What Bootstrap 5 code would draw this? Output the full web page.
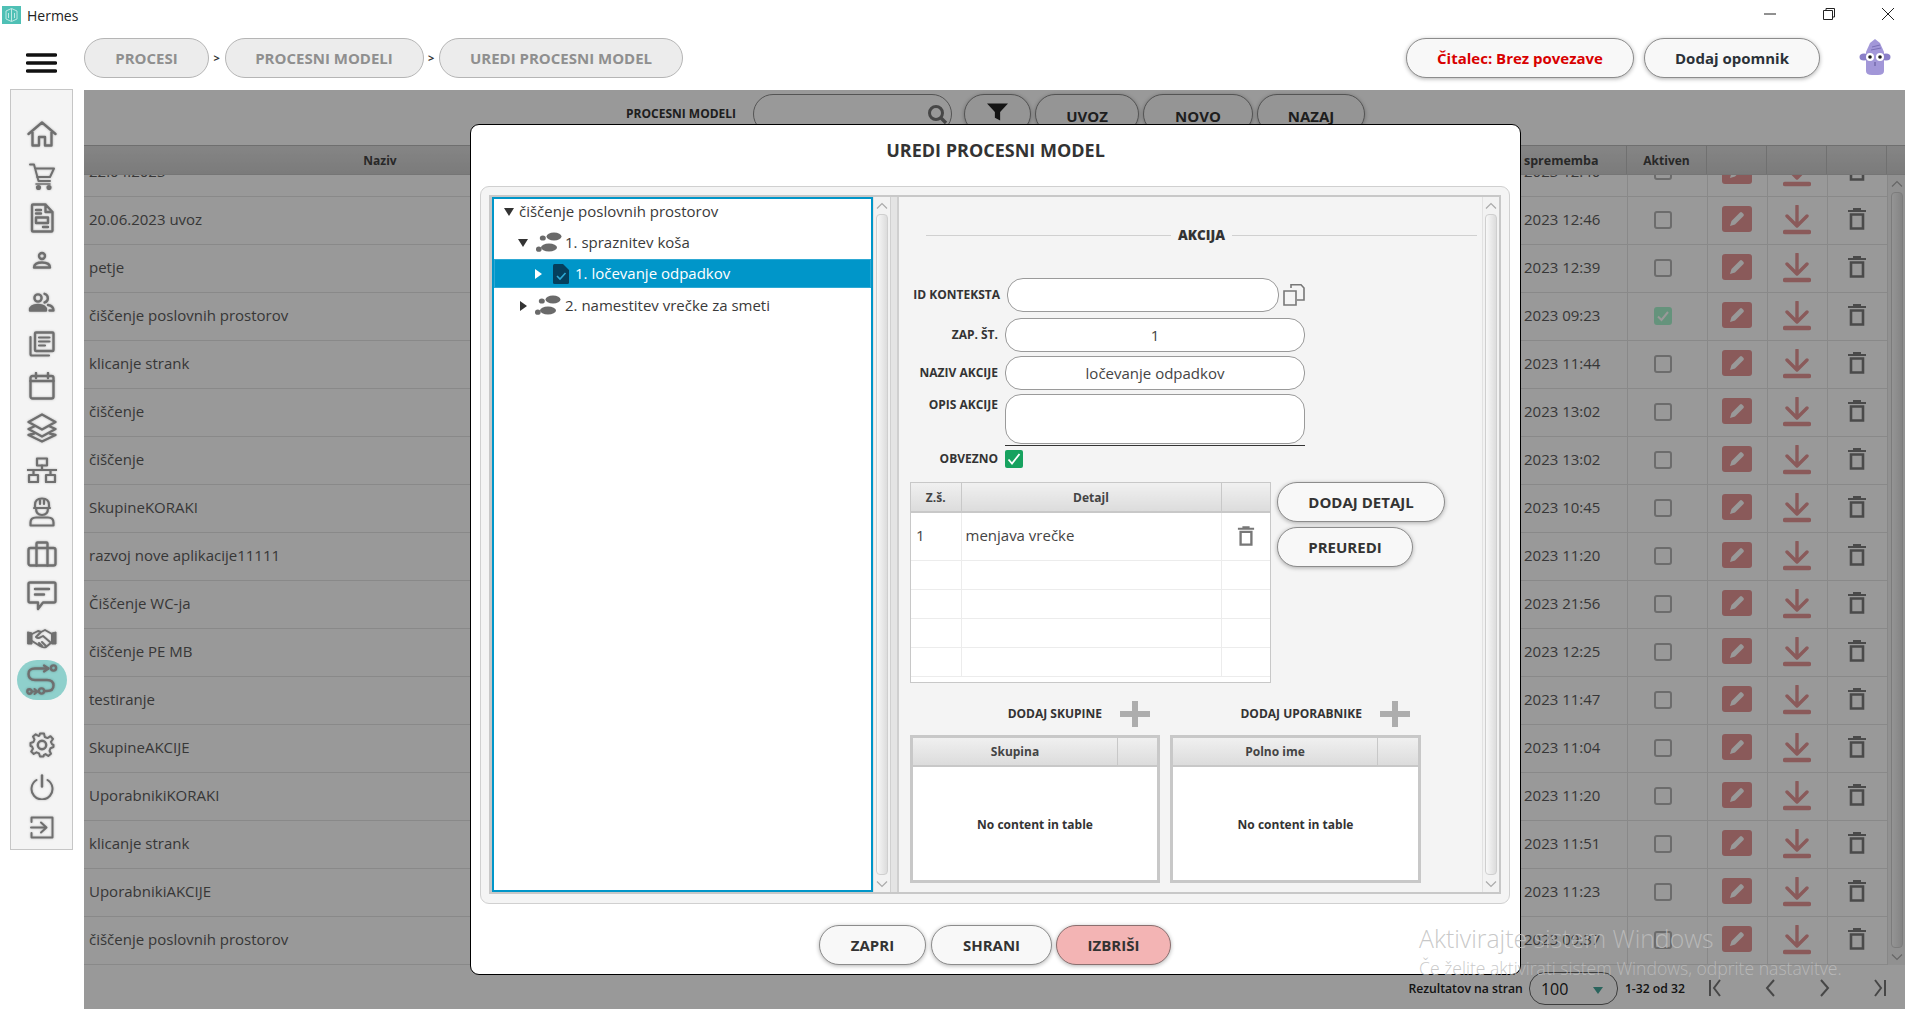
<!DOCTYPE html>
<html lang="sl">
<head>
<meta charset="utf-8">
<title>Hermes</title>
<link href="https://cdn.jsdelivr.net/npm/bootstrap@5.3.0/dist/css/bootstrap.min.css" rel="stylesheet">
<style>
html,body{margin:0;height:1029px;width:1920px;overflow:hidden;background:#fff;}
body{font-family:"Open Sans","Liberation Sans",sans-serif;font-size:15px;color:#333;}
.app-shell{position:relative;width:1920px;height:1029px;overflow:hidden;}
.title-bar{height:30px;padding-left:2px;}
.title-bar .app-name{font-size:14px;margin-left:6px;color:#222;}
.win-ctrls{margin-left:auto;margin-top:-2px;}
.win-ctrls svg{display:block;}
.top-bar{height:60px;padding-top:8px;}
.burger{width:84px;padding-left:26px;}
.pill-btn{height:40px;border-radius:20px;border:1px solid #8c8c8c;background:#f8f8f8;font-weight:700;font-size:15px;color:#333;box-shadow:0 1px 4px rgba(0,0,0,.3);display:flex;align-items:center;justify-content:center;padding:1px 0 0;white-space:nowrap;}
.crumb{background:#ececec;color:#8f8f8f;border-color:#b5b5b5;box-shadow:none;}
.crumb-1{width:125px}.crumb-2{width:199px}.crumb-3{width:244px}
.crumb-sep{width:15.5px;text-align:center;font-size:11px;line-height:40px;height:40px;font-weight:700;color:#333;}
.btn-reader{width:228px;color:#d80000;margin-left:723px;}
.btn-remind{width:176px;margin-left:10px;color:#2b3138;}
.mascot{margin-left:39px;}
.body-row{height:939px;}
.side-rail{margin-left:10px;width:63px;height:761px;margin-top:-1px;background:#f4f4f4;border:1px solid #c6c6c6;padding-top:23px;margin-right:11px;flex:none;}
.rail-slot{height:42px;display:flex;align-items:center;justify-content:center;position:relative;}
.rail-slot svg{fill:none;stroke:#6f6f6f;stroke-width:2.4;stroke-linecap:round;stroke-linejoin:round;filter:drop-shadow(0 0 1px rgba(0,0,0,.25));}
.rail-active{background:#8fd0cc;width:50px;height:40px;border-radius:20px;margin:1px auto 1px;}
.rail-gear{margin-top:23px;}
.rail-exit{margin-top:-2px;}
.work-area{position:relative;width:1821px;height:919px;overflow:hidden;background:#fff;flex:none;}
.tool-row{height:55px;padding-top:4px;}
.tool-label{margin-left:542px;width:127px;font-size:12px;font-weight:700;color:#333;padding-top:11px;}
.search-pill{width:199px;height:40px;border:1px solid #8c8c8c;border-radius:20px;background:#fff;position:relative;}
.search-pill svg{position:absolute;right:3px;top:8px;}
.tool-row .pill-btn{width:104px;margin-left:4px;align-items:flex-start;padding-top:10px;}
.tool-row .pill-filter{width:67px;margin-left:12px;padding-top:8px;}
.tool-row .pill-new{width:110px;}
.tool-row .pill-back{width:108px;}
.grid-wrap{height:820px;}
.grid-head{height:30px;border-top:1px solid #b9b9b9;border-bottom:1px solid #c3c3c3;background:linear-gradient(#dedede,#cdcdcd);font-size:12px;font-weight:700;color:#444;display:flex;}
.grid-head>div{display:flex;align-items:center;justify-content:center;border-right:1px solid #bbb;padding-top:2px;}
.grid-head>div.c-date{justify-content:flex-start;padding-left:8px;font-size:12.5px;}
.c-name{width:592px;flex:none}.c-fill{width:840px;flex:none}.c-date{width:111px;flex:none}.c-act{width:80px;flex:none}.c-ico{width:60px;flex:none}.c-sb{width:18px;flex:none}
.grid-body{height:790px;overflow:hidden;}
.grid-scroll{width:1803px;margin-top:-27px;}
.main-table{table-layout:fixed;width:1803px;margin:0;}
.main-table.table>tbody>tr>td{height:48px;padding:0;vertical-align:middle;border-bottom:1px solid #e4e4e4;border-top:0;border-left:0;border-right:1px solid #e4e4e4;color:#5c5c5c;font-size:15px;background:#fff;box-shadow:none;}
.main-table.table>tbody>tr>td.nm{padding:0 0 2px 5px;border-right:0;}
.main-table.table>tbody>tr>td.fl{border-right:0;}
.main-table.table>tbody>tr>td.dt{padding:0 0 2px 8px;white-space:nowrap;}
.main-table.table>tbody>tr>td.ct{text-align:center;}
.main-table svg{display:inline-block;vertical-align:middle;}
.chk-box{display:inline-block;width:18px;height:18px;border:2px solid #b4b4b4;border-radius:3px;vertical-align:middle;margin:0 8px 3px 0;}
.chk-on{background:#a9f5cf;border-color:#a9f5cf;position:relative;}
.chk-on svg{position:absolute;left:0;top:0;}
.ed-btn{display:inline-flex;width:30px;height:26px;background:#e69797;border-radius:3px;align-items:center;justify-content:center;margin-top:1px;}
.trash-cell svg{margin-bottom:3px;}
.grid-sb{background:#ececec;border-left:1px solid #ddd;height:790px;}
.pager-row{height:44px;font-size:12.2px;font-weight:600;color:#222;padding-right:19px;}
.page-select{width:89px;height:33px;border:1px solid #666;border-radius:16px;margin:7px 7px 0 6px;padding-left:11px;font-size:16px;font-weight:400;position:relative;display:flex;align-items:center;background:#fff;}
.page-select i{position:absolute;right:14px;top:14px;width:0;height:0;border:5px solid transparent;border-top:7px solid #46a79b;border-bottom:0;}
.pager-nav{margin-left:24px;width:177px;padding-top:14px;}
.pager-nav svg{fill:none;stroke:#777;stroke-width:2;}
.pager-txt{padding-top:15px;}
.scrim{position:absolute;inset:0;background:rgba(0,0,0,.4);}
.dlg{position:absolute;left:386px;top:34px;width:1051px;height:851px;background:#fff;border:1px solid #000;border-radius:9px;}
.dlg-title{height:61px;display:flex;align-items:center;justify-content:center;font-size:18px;font-weight:700;color:#333;padding-bottom:10px;}
.dlg-panel{margin:0 10px 0 9px;height:718px;background:#f4f4f4;border:1px solid #d0d0d0;border-radius:9px;padding:8px;}
.split{height:699px;border:2px solid #c8c8c8;border-left-width:3px;}
.tree-box{width:381px;flex:none;background:#fff;border:2px solid #0096c9;position:relative;overflow:hidden;}
.tree-line{height:31px;display:flex;align-items:center;font-size:15px;color:#3a3a3a;position:relative;white-space:nowrap;}
.tree-line:first-child{margin-top:-3px;}
.tree-line.sel{background:#0096c9;color:#fff;height:29px;border:1px solid #2ea9d4;margin:1px 0 2px;}
.tw{width:0;height:0;flex:none;}
.tw-d{border-left:5px solid transparent;border-right:5px solid transparent;border-top:8px solid #333;}
.tw-r{border-top:5px solid transparent;border-bottom:5px solid transparent;border-left:7px solid #333;}
.tw-w{border-left-color:#fff;}
.vbar{width:17px;flex:none;background:#f2f2f2;border-left:1px solid #e2e2e2;display:flex;flex-direction:column;align-items:center;position:relative;}
.vbar .arrow{height:17px;display:flex;align-items:center;justify-content:center;flex:none;}
.vbar .thumb{flex:1;width:12px;border:1px solid #cfcfcf;border-radius:4px;background:linear-gradient(90deg,#f8f8f8,#dcdcdc);}
.divider{width:9px;flex:none;background:#e4e4e4;border-left:1px solid #d0d0d0;border-right:2px solid #cfcfcf;}
.form-pane{flex:1;background:#f4f4f4;padding-left:11px;min-width:0;}
.sect-head{height:20px;margin-top:28px;margin-left:16px;margin-right:5px;display:flex;align-items:center;font-size:13.5px;font-weight:700;color:#333;}
.sect-head span{flex:1;height:1px;background:#d0d0d0;}
.sect-head b{margin:0 7px;}
.fld-row{display:flex;align-items:center;}
.fld-lab{font-size:12px;font-weight:700;color:#333;text-align:right;white-space:nowrap;}
.inp{height:34px;background:#fff;border:1px solid #9a9a9a;border-radius:16px;font-size:15px;color:#444;display:flex;align-items:center;justify-content:center;padding:0;}
.inp-long{width:300px;margin-left:7px;}
.l88{width:88px;}
.notes{height:50px;align-items:flex-start;}
.notes-wrap{margin-left:7px;border-bottom:1px solid #333;padding-bottom:1px;}
.notes-wrap .inp{height:50px;width:300px;}
.green-chk{width:18px;height:18px;background:#17a25f;border-radius:2px;margin-left:7px;display:flex;align-items:center;justify-content:center;}
.detail-tbl{width:361px;height:201px;border:1px solid #c8c8c8;overflow:hidden;background:#fff;}
.detail-tbl .table{table-layout:fixed;width:359px;margin:0;}
.detail-tbl .table>thead>tr>th{height:29px;padding:2px 0 0;background:linear-gradient(#f0f0f0,#dcdcdc);font-size:12px;font-weight:700;text-align:center;color:#444;border:0;border-right:1px solid #c8c8c8;border-bottom:2px solid #c8c8c8;vertical-align:middle;box-shadow:none;}
.detail-tbl .table>tbody>tr>td{height:29px;padding:0;background:#fff;border:0;border-right:1px solid #ececec;border-bottom:1px solid #ececec;font-size:15px;color:#444;vertical-align:middle;box-shadow:none;}
.detail-tbl .table>tbody>tr.first>td{height:48px;padding-bottom:2px;}
.add-half{width:249px;display:flex;align-items:center;justify-content:flex-end;font-size:12px;font-weight:700;color:#333;}
.plus-ico{margin-left:18px;}
.mini-tbl{width:249px;height:148px;border:3px solid #c8c8c8;background:#fff;display:flex;flex-direction:column;}
.mini-head{height:29px;flex:none;display:flex;background:linear-gradient(#f0f0f0,#dcdcdc);border-bottom:2px solid #c8c8c8;font-size:12px;font-weight:700;color:#444;}
.mini-head div:first-child{width:205px;display:flex;align-items:center;justify-content:center;border-right:1px solid #c8c8c8;}
.mini-empty{flex:1;display:flex;align-items:center;justify-content:center;font-size:12px;font-weight:700;color:#333;padding-top:2px;}
.dlg-foot{padding-top:21px;padding-right:1px;}
.f-zapri{width:107px}.f-shrani{width:121px;margin-left:5px}.f-izbrisi{width:115px;margin-left:4px;background:#f3b4b4!important;border-color:#8b6f6f!important}
.wm{position:absolute;left:1419px;top:922px;color:rgba(190,190,190,.85);font-weight:300;pointer-events:none;white-space:nowrap;}
.wm-1{font-size:24.8px;line-height:33px;}
.wm-2{font-size:17.6px;line-height:24px;margin-top:1px;}
.act-wide{width:168px;}
.act-narrow{width:136px;margin-top:5px;}
</style>
</head>
<body>
<svg width="0" height="0" style="position:absolute">
<defs>
<symbol id="i-pen" viewBox="0 0 20 20"><path d="M3 17 L4.5 12 L13 3.5 Q14 2.7 15 3.5 L16.5 5 Q17.3 6 16.5 7 L8 15.5 Z" fill="#fff"/></symbol>
<symbol id="i-dl" viewBox="0 0 28 30"><path d="M14 1 V20 M4 11 L14 21 L24 11" fill="none" stroke="#e69797" stroke-width="3.4" stroke-linecap="round" stroke-linejoin="round"/><path d="M2 27 H26" stroke="#e69797" stroke-width="4.4" stroke-linecap="round"/></symbol>
<symbol id="i-tr" viewBox="0 0 20 22"><path d="M1 3 H19 M6 1.2 H14" stroke="currentColor" stroke-width="2.2"/><path d="M4 6.5 H16 V20.5 H4 Z" fill="none" stroke="currentColor" stroke-width="2.6"/></symbol>
<symbol id="i-ft" viewBox="0 0 26 21"><g fill="#6a6a6a"><ellipse cx="18" cy="4.5" rx="7.5" ry="4"/><ellipse cx="6.8" cy="6" rx="3" ry="2.6"/><ellipse cx="13" cy="15.5" rx="8" ry="4"/><ellipse cx="2.8" cy="17.2" rx="2.8" ry="2.6"/></g></symbol>
<symbol id="i-up" viewBox="0 0 12 8"><path d="M1 6.5 L6 1.5 L11 6.5" fill="none" stroke="#aaa" stroke-width="1.2"/></symbol>
<symbol id="i-down" viewBox="0 0 12 8"><path d="M1 1.5 L6 6.5 L11 1.5" fill="none" stroke="#aaa" stroke-width="1.2"/></symbol>
<symbol id="i-plus" viewBox="0 0 30 26"><path d="M12 0 H18 V10 H30 V16 H18 V26 H12 V16 H0 V10 H12 Z" fill="#adadad"/></symbol>
</defs>
</svg>
<div class="app-shell">
  <div class="title-bar d-flex align-items-center">
    <svg width="19" height="18" viewBox="0 0 19 18"><rect width="19" height="18" fill="#4fc0b5"/><path d="M4 5 L9.5 2.5 L15 5 V13 L9.5 15.5 L4 13 Z M9.5 2.5 V15.5 M6.5 7 V12 M12.5 7 V12" fill="none" stroke="#bfe9e4" stroke-width="1"/></svg>
    <span class="app-name">Hermes</span>
    <div class="win-ctrls d-flex align-items-center">
      <svg width="14" height="14" viewBox="0 0 14 14" style="margin-right:45px"><path d="M1 7 H13" stroke="#222" stroke-width="1"/></svg>
      <svg width="14" height="14" viewBox="0 0 14 14" style="margin-right:45px"><path d="M1.5 3.5 H10.5 V12.5 H1.5 Z M4 3.5 V1.5 H12.5 V10 H10.5" fill="none" stroke="#222" stroke-width="1"/></svg>
      <svg width="14" height="14" viewBox="0 0 14 14" style="margin-right:25px"><path d="M1 1 L13 13 M13 1 L1 13" stroke="#222" stroke-width="1"/></svg>
    </div>
  </div>
  <div class="top-bar d-flex align-items-start">
    <div class="burger"><svg width="31" height="20" viewBox="0 0 31 20" style="margin-top:15px;display:block"><path d="M1.5 2 H29.5 M1.5 10 H29.5 M1.5 18 H29.5" stroke="#111" stroke-width="3.4" stroke-linecap="round"/></svg></div>
    <button class="pill-btn crumb crumb-1" type="button">PROCESI</button>
    <span class="crumb-sep">&gt;</span>
    <button class="pill-btn crumb crumb-2" type="button">PROCESNI MODELI</button>
    <span class="crumb-sep">&gt;</span>
    <button class="pill-btn crumb crumb-3" type="button">UREDI PROCESNI MODEL</button>
    <button class="pill-btn btn-reader" type="button">Čitalec: Brez povezave</button>
    <button class="pill-btn btn-remind" type="button">Dodaj opomnik</button>
    <svg class="mascot" width="32" height="38" viewBox="0 0 32 38"><path d="M16 1 L21 5 L25 14 V33 Q25 37 19 37 H13 Q7 37 7 33 V14 L11 5 Z" fill="#a297d8"/><ellipse cx="5" cy="19" rx="4.5" ry="3.5" fill="#8a7fc8"/><ellipse cx="27" cy="19" rx="4.5" ry="3.5" fill="#8a7fc8"/><path d="M13 9 L21 7 M12 12 L22 10" stroke="#7b70b8" stroke-width="1"/><circle cx="11" cy="19" r="4" fill="#fff"/><circle cx="21" cy="19" r="4" fill="#fff"/><circle cx="11" cy="19" r="1.8" fill="#222"/><circle cx="21" cy="19" r="1.8" fill="#222"/><path d="M16 24 V28" stroke="#5f5596" stroke-width="1"/></svg>
  </div>
  <div class="body-row d-flex align-items-start">
    <nav class="side-rail">
      <div class="rail-slot"><svg width="30" height="26" viewBox="0 0 30 26"><path d="M1.5 13 L15 1.5 L28.5 13 M5.5 11 V24.5 H12 V16 H18 V24.5 H24.5 V11"/></svg></div>
      <div class="rail-slot"><svg width="26" height="27" viewBox="0 0 26 27" stroke-width="2"><path d="M1 1.5 H5 L9.5 18 H21 M6 5.5 H25 L21 14 H8" stroke-width="2"/><path d="M7 21 H21" stroke-width="1.6"/><circle cx="9.5" cy="24.5" r="1.4" fill="#6f6f6f"/><circle cx="20" cy="24.5" r="1.4" fill="#6f6f6f"/></svg></div>
      <div class="rail-slot"><svg width="24" height="30" viewBox="0 0 24 30"><path d="M2 2.5 Q2 1.5 3 1.5 H15.5 L22.5 9 V27.5 Q22.5 28.5 21.5 28.5 H3 Q2 28.5 2 27.5 Z M15.5 1.5 V9 H22.5 M6 7 H11 M6 10.5 H11 M6 14.5 H18 V20 H6 Z M13 24 H18"/></svg></div>
      <div class="rail-slot"><svg width="20" height="19" viewBox="0 0 20 19"><circle cx="10" cy="5" r="3"/><path d="M2 16.5 Q2 11.5 10 11.5 Q18 11.5 18 16.5 Z"/></svg></div>
      <div class="rail-slot"><svg width="27" height="20" viewBox="0 0 27 20"><circle cx="10" cy="6" r="3.6"/><path d="M2 18.5 Q2 13 10 13 Q18 13 18 18.5 Z" fill="#6f6f6f"/><path d="M16.5 1.8 A4.5 4.5 0 0 1 16.5 10.5 M20 13 Q25.5 14 25.5 18.5 H21.5" fill="none"/></svg></div>
      <div class="rail-slot"><svg width="26" height="26" viewBox="0 0 26 26"><rect x="6" y="1.5" width="18.5" height="18.5" rx="1"/><path d="M1.5 6 V23 Q1.5 24.5 3 24.5 H20 M10 6.5 H20.5 M10 10.5 H20.5 M10 14.5 H16" stroke-width="2.2"/></svg></div>
      <div class="rail-slot"><svg width="26" height="28" viewBox="0 0 26 28"><rect x="1.5" y="4" width="23" height="22.5" rx="2"/><path d="M1.5 9 H24.5 M7 1 V6 M19 1 V6"/></svg></div>
      <div class="rail-slot"><svg width="30" height="30" viewBox="0 0 30 30"><path d="M15 1.5 L28.5 9 L15 16.5 L1.5 9 Z M7 13.5 L1.5 16 L15 23.5 L28.5 16 L23 13.5 M7 20.5 L1.5 22 L15 28.5 L28.5 22 L23 20.5"/></svg></div>
      <div class="rail-slot"><svg width="30" height="26" viewBox="0 0 30 26"><rect x="10" y="1.5" width="10" height="7" stroke-width="2.2"/><rect x="2" y="18" width="9" height="7" stroke-width="2.2"/><rect x="19" y="18" width="9" height="7" stroke-width="2.2"/><path d="M0.5 13 H29.5 M15 8.5 V13 M6.5 13 V18 M23.5 13 V18" stroke-width="2.2"/></svg></div>
      <div class="rail-slot"><svg width="26" height="30" viewBox="0 0 26 30"><path d="M6 11 V8 Q6 1.5 13 1.5 Q20 1.5 20 8 V11 M5 11 H21 M7 11 Q7 18 13 18 Q19 18 19 11 M11 2 V7 M15 2 V7 M1.5 28.5 V25.5 Q1.5 20.5 7 20.5 H19 Q24.5 20.5 24.5 25.5 V28.5 Z" stroke-width="2.2"/></svg></div>
      <div class="rail-slot"><svg width="30" height="26" viewBox="0 0 30 26"><rect x="1.5" y="7" width="27" height="17.5" rx="2"/><path d="M9.5 7 V2.5 Q9.5 1.5 10.5 1.5 H19.5 Q20.5 1.5 20.5 2.5 V7 M9.5 7 V24.5 M20.5 7 V24.5"/></svg></div>
      <div class="rail-slot"><svg width="30" height="30" viewBox="0 0 30 30"><path d="M3 1.5 H27 Q28.5 1.5 28.5 3 V20 Q28.5 21.5 27 21.5 H16 L11 28 V21.5 H3 Q1.5 21.5 1.5 20 V3 Q1.5 1.5 3 1.5 Z M8 8 H22 M8 13.5 H17"/></svg></div>
      <div class="rail-slot"><svg width="30" height="21" viewBox="0 0 30 21"><path d="M1 4 L5 5 V16 H1 Z M25 5 L29 4 V16 H25 Z" fill="#6f6f6f" stroke-width="1"/><path d="M5 6 L11 3 L14 4 L18 2 L25 6 V14 L19 19 Q16 20 13 18 L5 13 M14 4 L9 9 Q11 11 14 9 L16 8 L23 14 M15 14 L19 18 M12 15 L15 18" stroke-width="1.9"/></svg></div>
      <div class="rail-slot"><div class="rail-active d-flex align-items-center justify-content-center"><svg width="32" height="32" viewBox="0 0 32 32"><path d="M22 4.5 H9 Q2.5 4.5 2.5 10 Q2.5 16 9 16 H21 Q27.5 16 27.5 21.5 Q27.5 27 21 27 H18.5" stroke-width="2.4"/><path d="M18 1.5 L22.5 4.5 L18 7.5" stroke-width="2.2"/><circle cx="27.5" cy="4" r="2.6"/><circle cx="15.5" cy="27" r="2.6"/><circle cx="3.5" cy="27.5" r="2.2"/><path d="M6 27.5 H11 M8.5 25 L11.5 27.5 L8.5 30" stroke-width="2"/></svg></div></div>
      <div class="rail-slot rail-gear"><svg width="26" height="26" viewBox="0 0 26 26"><circle cx="13" cy="13" r="4.2"/><path d="M11 1.5 H15 L15.8 5 L18.5 6.1 L21.5 4.2 L24 7 L21.9 9.8 L23 12.2 L24.5 13 V15 L21.5 16.2 L20.5 18.8 L22 21.8 L19.3 24 L16.5 22.1 L15 22.8 L14.5 24.5 H11 L10 21.4 L7.5 20.3 L4.7 22 L2.2 19.5 L4 16.8 L3 14.5 L1.5 14 V11 L4.5 10 L5.5 7.5 L4 4.5 L6.7 2.3 L9.5 4 L10.4 3.6 Z" stroke-width="2"/></svg></div>
      <div class="rail-slot"><svg width="24" height="26" viewBox="0 0 24 26"><path d="M12 1.5 V12.5"/><path d="M6.5 6 A10.5 10.5 0 1 0 17.5 6" stroke-width="2"/></svg></div>
      <div class="rail-slot rail-exit"><svg width="24" height="23" viewBox="0 0 24 23"><path d="M1.5 6 V1.5 H22.5 V21.5 H1.5 V17" stroke-width="2"/><path d="M1 11.5 H16 M11 6.5 L16.5 11.5 L11 16.5" stroke-width="2"/></svg></div>
    </nav>
    <main class="work-area">
      <div class="tool-row d-flex align-items-start">
        <div class="tool-label">PROCESNI MODELI</div>
        <div class="search-pill"><svg width="22" height="22" viewBox="0 0 22 22"><circle cx="10" cy="10" r="6.5" fill="none" stroke="#777" stroke-width="3"/><path d="M14.5 14.5 L20 20" stroke="#777" stroke-width="3.4"/></svg></div>
        <button class="pill-btn pill-filter" type="button"><svg width="21" height="18" viewBox="0 0 20 16"><path d="M0 0 H20 L12.5 8 V16 L7.5 13.5 V8 Z" fill="#222"/></svg></button>
        <button class="pill-btn" type="button">UVOZ</button>
        <button class="pill-btn pill-new" type="button">NOVO</button>
        <button class="pill-btn pill-back" type="button">NAZAJ</button>
      </div>
      <div class="grid-wrap">
        <div class="grid-head">
          <div class="c-name" style="border-right:0">Naziv</div><div class="c-fill"></div><div class="c-date">sprememba</div><div class="c-act">Aktiven</div><div class="c-ico"></div><div class="c-ico"></div><div class="c-ico"></div><div class="c-sb" style="border-right:0"></div>
        </div>
        <div class="d-flex">
          <div class="grid-body">
            <div class="grid-scroll">
              <table class="table main-table">
                <colgroup><col class="c-name"><col class="c-fill"><col class="c-date"><col class="c-act"><col class="c-ico"><col class="c-ico"><col class="c-ico"></colgroup>
                <tbody>
                <tr><td class="nm">22.04.2023</td><td class="fl"></td><td class="dt">2023 12:40</td><td class="ct"><span class="chk-box"></span></td><td class="ct"><span class="ed-btn"><svg width="20" height="20"><use href="#i-pen"/></svg></span></td><td class="ct"><svg width="28" height="30"><use href="#i-dl"/></svg></td><td class="ct trash-cell" style="color:#7c7c7c"><svg width="20" height="22"><use href="#i-tr"/></svg></td></tr>
                <tr><td class="nm">20.06.2023 uvoz</td><td class="fl"></td><td class="dt">2023 12:46</td><td class="ct"><span class="chk-box"></span></td><td class="ct"><span class="ed-btn"><svg width="20" height="20"><use href="#i-pen"/></svg></span></td><td class="ct"><svg width="28" height="30"><use href="#i-dl"/></svg></td><td class="ct trash-cell" style="color:#7c7c7c"><svg width="20" height="22"><use href="#i-tr"/></svg></td></tr>
                <tr><td class="nm">petje</td><td class="fl"></td><td class="dt">2023 12:39</td><td class="ct"><span class="chk-box"></span></td><td class="ct"><span class="ed-btn"><svg width="20" height="20"><use href="#i-pen"/></svg></span></td><td class="ct"><svg width="28" height="30"><use href="#i-dl"/></svg></td><td class="ct trash-cell" style="color:#7c7c7c"><svg width="20" height="22"><use href="#i-tr"/></svg></td></tr>
                <tr><td class="nm">čiščenje poslovnih prostorov</td><td class="fl"></td><td class="dt">2023 09:23</td><td class="ct"><span class="chk-box chk-on"><svg width="14" height="14" viewBox="0 0 14 14"><path d="M2 7.5 L5.5 11 L12 3" fill="none" stroke="#fff" stroke-width="2"/></svg></span></td><td class="ct"><span class="ed-btn"><svg width="20" height="20"><use href="#i-pen"/></svg></span></td><td class="ct"><svg width="28" height="30"><use href="#i-dl"/></svg></td><td class="ct trash-cell" style="color:#7c7c7c"><svg width="20" height="22"><use href="#i-tr"/></svg></td></tr>
                <tr><td class="nm">klicanje strank</td><td class="fl"></td><td class="dt">2023 11:44</td><td class="ct"><span class="chk-box"></span></td><td class="ct"><span class="ed-btn"><svg width="20" height="20"><use href="#i-pen"/></svg></span></td><td class="ct"><svg width="28" height="30"><use href="#i-dl"/></svg></td><td class="ct trash-cell" style="color:#7c7c7c"><svg width="20" height="22"><use href="#i-tr"/></svg></td></tr>
                <tr><td class="nm">čiščenje</td><td class="fl"></td><td class="dt">2023 13:02</td><td class="ct"><span class="chk-box"></span></td><td class="ct"><span class="ed-btn"><svg width="20" height="20"><use href="#i-pen"/></svg></span></td><td class="ct"><svg width="28" height="30"><use href="#i-dl"/></svg></td><td class="ct trash-cell" style="color:#7c7c7c"><svg width="20" height="22"><use href="#i-tr"/></svg></td></tr>
                <tr><td class="nm">čiščenje</td><td class="fl"></td><td class="dt">2023 13:02</td><td class="ct"><span class="chk-box"></span></td><td class="ct"><span class="ed-btn"><svg width="20" height="20"><use href="#i-pen"/></svg></span></td><td class="ct"><svg width="28" height="30"><use href="#i-dl"/></svg></td><td class="ct trash-cell" style="color:#7c7c7c"><svg width="20" height="22"><use href="#i-tr"/></svg></td></tr>
                <tr><td class="nm">SkupineKORAKI</td><td class="fl"></td><td class="dt">2023 10:45</td><td class="ct"><span class="chk-box"></span></td><td class="ct"><span class="ed-btn"><svg width="20" height="20"><use href="#i-pen"/></svg></span></td><td class="ct"><svg width="28" height="30"><use href="#i-dl"/></svg></td><td class="ct trash-cell" style="color:#7c7c7c"><svg width="20" height="22"><use href="#i-tr"/></svg></td></tr>
                <tr><td class="nm">razvoj nove aplikacije11111</td><td class="fl"></td><td class="dt">2023 11:20</td><td class="ct"><span class="chk-box"></span></td><td class="ct"><span class="ed-btn"><svg width="20" height="20"><use href="#i-pen"/></svg></span></td><td class="ct"><svg width="28" height="30"><use href="#i-dl"/></svg></td><td class="ct trash-cell" style="color:#7c7c7c"><svg width="20" height="22"><use href="#i-tr"/></svg></td></tr>
                <tr><td class="nm">Čiščenje WC-ja</td><td class="fl"></td><td class="dt">2023 21:56</td><td class="ct"><span class="chk-box"></span></td><td class="ct"><span class="ed-btn"><svg width="20" height="20"><use href="#i-pen"/></svg></span></td><td class="ct"><svg width="28" height="30"><use href="#i-dl"/></svg></td><td class="ct trash-cell" style="color:#7c7c7c"><svg width="20" height="22"><use href="#i-tr"/></svg></td></tr>
                <tr><td class="nm">čiščenje PE MB</td><td class="fl"></td><td class="dt">2023 12:25</td><td class="ct"><span class="chk-box"></span></td><td class="ct"><span class="ed-btn"><svg width="20" height="20"><use href="#i-pen"/></svg></span></td><td class="ct"><svg width="28" height="30"><use href="#i-dl"/></svg></td><td class="ct trash-cell" style="color:#7c7c7c"><svg width="20" height="22"><use href="#i-tr"/></svg></td></tr>
                <tr><td class="nm">testiranje</td><td class="fl"></td><td class="dt">2023 11:47</td><td class="ct"><span class="chk-box"></span></td><td class="ct"><span class="ed-btn"><svg width="20" height="20"><use href="#i-pen"/></svg></span></td><td class="ct"><svg width="28" height="30"><use href="#i-dl"/></svg></td><td class="ct trash-cell" style="color:#7c7c7c"><svg width="20" height="22"><use href="#i-tr"/></svg></td></tr>
                <tr><td class="nm">SkupineAKCIJE</td><td class="fl"></td><td class="dt">2023 11:04</td><td class="ct"><span class="chk-box"></span></td><td class="ct"><span class="ed-btn"><svg width="20" height="20"><use href="#i-pen"/></svg></span></td><td class="ct"><svg width="28" height="30"><use href="#i-dl"/></svg></td><td class="ct trash-cell" style="color:#7c7c7c"><svg width="20" height="22"><use href="#i-tr"/></svg></td></tr>
                <tr><td class="nm">UporabnikiKORAKI</td><td class="fl"></td><td class="dt">2023 11:20</td><td class="ct"><span class="chk-box"></span></td><td class="ct"><span class="ed-btn"><svg width="20" height="20"><use href="#i-pen"/></svg></span></td><td class="ct"><svg width="28" height="30"><use href="#i-dl"/></svg></td><td class="ct trash-cell" style="color:#7c7c7c"><svg width="20" height="22"><use href="#i-tr"/></svg></td></tr>
                <tr><td class="nm">klicanje strank</td><td class="fl"></td><td class="dt">2023 11:51</td><td class="ct"><span class="chk-box"></span></td><td class="ct"><span class="ed-btn"><svg width="20" height="20"><use href="#i-pen"/></svg></span></td><td class="ct"><svg width="28" height="30"><use href="#i-dl"/></svg></td><td class="ct trash-cell" style="color:#7c7c7c"><svg width="20" height="22"><use href="#i-tr"/></svg></td></tr>
                <tr><td class="nm">UporabnikiAKCIJE</td><td class="fl"></td><td class="dt">2023 11:23</td><td class="ct"><span class="chk-box"></span></td><td class="ct"><span class="ed-btn"><svg width="20" height="20"><use href="#i-pen"/></svg></span></td><td class="ct"><svg width="28" height="30"><use href="#i-dl"/></svg></td><td class="ct trash-cell" style="color:#7c7c7c"><svg width="20" height="22"><use href="#i-tr"/></svg></td></tr>
                <tr><td class="nm">čiščenje poslovnih prostorov</td><td class="fl"></td><td class="dt">2023 09:37</td><td class="ct"><span class="chk-box"></span></td><td class="ct"><span class="ed-btn"><svg width="20" height="20"><use href="#i-pen"/></svg></span></td><td class="ct"><svg width="28" height="30"><use href="#i-dl"/></svg></td><td class="ct trash-cell" style="color:#7c7c7c"><svg width="20" height="22"><use href="#i-tr"/></svg></td></tr>
                </tbody>
              </table>
            </div>
          </div>
          <div class="grid-sb vbar" style="width:18px">
            <div class="arrow"><svg width="12" height="8"><use href="#i-up"/></svg></div>
            <div class="thumb"></div>
            <div class="arrow"><svg width="12" height="8"><use href="#i-down"/></svg></div>
          </div>
        </div>
      </div>
      <div class="pager-row d-flex justify-content-end align-items-start">
        <span class="pager-txt">Rezultatov na stran</span>
        <div class="page-select">100<i></i></div>
        <span class="pager-txt">1-32 od 32</span>
        <div class="pager-nav d-flex justify-content-between">
          <svg width="12" height="18" viewBox="0 0 12 18"><path d="M1 1 V17 M11 1 L5 9 L11 17"/></svg>
          <svg width="10" height="18" viewBox="0 0 10 18"><path d="M9 1 L2 9 L9 17"/></svg>
          <svg width="10" height="18" viewBox="0 0 10 18"><path d="M1 1 L8 9 L1 17"/></svg>
          <svg width="12" height="18" viewBox="0 0 12 18"><path d="M1 1 L7 9 L1 17 M11 1 V17"/></svg>
        </div>
      </div>
      <div class="scrim"></div>
      <section class="dlg">
        <div class="dlg-title">UREDI PROCESNI MODEL</div>
        <div class="dlg-panel">
          <div class="split d-flex">
            <div class="tree-box">
              <div class="tree-line"><span class="tw tw-d" style="margin-left:10px;margin-right:5px"></span>čiščenje poslovnih prostorov</div>
              <div class="tree-line"><span class="tw tw-d" style="margin-left:24px;margin-right:8px"></span><svg width="26" height="21" style="margin-right:3px"><use href="#i-ft"/></svg>1. spraznitev koša</div>
              <div class="tree-line sel"><span class="tw tw-r tw-w" style="margin-left:40px;margin-right:11px"></span><svg width="16" height="20" viewBox="0 0 16 20" style="margin-right:6px"><path d="M1.5 0 H10 L16 6 V18.5 Q16 20 14.5 20 H1.5 Q0 20 0 18.5 V1.5 Q0 0 1.5 0 Z" fill="#053f5c"/><path d="M4 12 L7 15 L12.5 9" fill="none" stroke="#2ea9d4" stroke-width="1.6"/></svg>1. ločevanje odpadkov</div>
              <div class="tree-line"><span class="tw tw-r" style="margin-left:26px;margin-right:8px"></span><svg width="26" height="21" style="margin-right:4px"><use href="#i-ft"/></svg>2. namestitev vrečke za smeti</div>
            </div>
            <div class="vbar">
              <div class="arrow"><svg width="12" height="8"><use href="#i-up"/></svg></div>
              <div class="thumb"></div>
              <div class="arrow"><svg width="12" height="8"><use href="#i-down"/></svg></div>
            </div>
            <div class="divider"></div>
            <div class="form-pane">
              <div class="sect-head"><span></span><b>AKCIJA</b><span></span></div>
              <div class="fld-row" style="margin-top:33px">
                <div class="fld-lab" style="width:90px">ID KONTEKSTA</div>
                <div class="inp" style="width:272px;margin-left:7px"></div>
                <svg width="22" height="22" viewBox="0 0 22 22" style="margin-left:4px"><path d="M8 4 V0.8 H18 L21 4 V16 H14 M1 7 H13 V21 H1 Z" fill="none" stroke="#777" stroke-width="1.6"/></svg>
              </div>
              <div class="fld-row" style="margin-top:6px"><div class="fld-lab l88">ZAP. ŠT.</div><div class="inp inp-long">1</div></div>
              <div class="fld-row" style="margin-top:4px"><div class="fld-lab l88">NAZIV AKCIJE</div><div class="inp inp-long">ločevanje odpadkov</div></div>
              <div class="fld-row notes" style="margin-top:4px"><div class="fld-lab l88" style="padding-top:2px">OPIS AKCIJE</div><div class="notes-wrap"><div class="inp"></div></div></div>
              <div class="fld-row" style="margin-top:6px"><div class="fld-lab l88">OBVEZNO</div><div class="green-chk"><svg width="14" height="14" viewBox="0 0 14 14"><path d="M1.5 7.5 L5 11.5 L12.5 2" fill="none" stroke="#fff" stroke-width="1.8"/></svg></div></div>
              <div class="d-flex" style="margin-top:14px">
                <div class="detail-tbl">
                  <table class="table">
                    <colgroup><col style="width:50px"><col style="width:260px"><col style="width:49px"></colgroup>
                    <thead><tr><th>Z.š.</th><th>Detajl</th><th></th></tr></thead>
                    <tbody>
                      <tr class="first"><td style="padding-left:5px">1</td><td style="padding-left:4px">menjava vrečke</td><td style="text-align:center;color:#777"><svg width="18" height="22"><use href="#i-tr"/></svg></td></tr>
                      <tr><td></td><td></td><td></td></tr>
                      <tr><td></td><td></td><td></td></tr>
                      <tr><td></td><td></td><td></td></tr>
                      <tr><td></td><td></td><td></td></tr>
                    </tbody>
                  </table>
                </div>
                <div style="margin-left:6px">
                  <button class="pill-btn act-wide" type="button">DODAJ DETAJL</button>
                  <button class="pill-btn act-narrow" type="button">PREUREDI</button>
                </div>
              </div>
              <div class="d-flex" style="margin-top:18px">
                <div class="add-half" style="padding-right:9px">DODAJ SKUPINE<svg class="plus-ico" width="30" height="26"><use href="#i-plus"/></svg></div>
                <div class="add-half" style="margin-left:11px;padding-right:10px;width:250px">DODAJ UPORABNIKE<svg class="plus-ico" width="30" height="26"><use href="#i-plus"/></svg></div>
              </div>
              <div class="d-flex" style="margin-top:8px">
                <div class="mini-tbl" style="width:250px"><div class="mini-head"><div>Skupina</div></div><div class="mini-empty">No content in table</div></div>
                <div class="mini-tbl" style="margin-left:10px;width:251px"><div class="mini-head"><div>Polno ime</div></div><div class="mini-empty">No content in table</div></div>
              </div>
            </div>
            <div class="vbar">
              <div class="arrow"><svg width="12" height="8"><use href="#i-up"/></svg></div>
              <div class="thumb"></div>
              <div class="arrow"><svg width="12" height="8"><use href="#i-down"/></svg></div>
            </div>
          </div>
        </div>
        <div class="dlg-foot d-flex justify-content-center">
          <button class="pill-btn f-zapri" type="button">ZAPRI</button>
          <button class="pill-btn f-shrani" type="button">SHRANI</button>
          <button class="pill-btn f-izbrisi" type="button">IZBRIŠI</button>
        </div>
      </section>
    </main>
  </div>
  <div class="wm"><div class="wm-1">Aktivirajte sistem Windows</div><div class="wm-2">Če želite aktivirati sistem Windows, odprite nastavitve.</div></div>
</div>
<script src="https://cdn.jsdelivr.net/npm/bootstrap@5.3.0/dist/js/bootstrap.bundle.min.js"></script>
</body>
</html>
